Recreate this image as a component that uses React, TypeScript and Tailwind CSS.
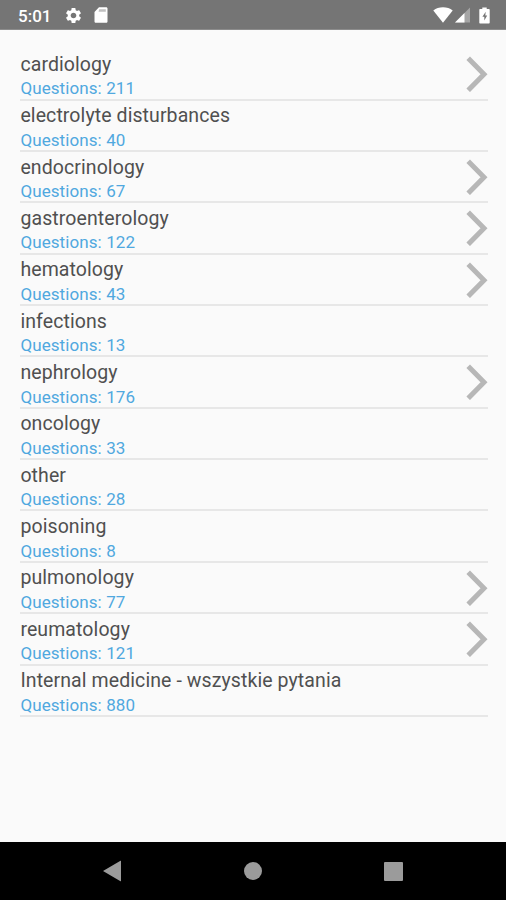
import { MdSettings } from 'react-icons/md'

interface Category {
  name: string
  questions: number
  nested?: boolean
}

const categories: Category[] = [
  { name: 'cardiology', questions: 211, nested: true },
  { name: 'electrolyte disturbances', questions: 40 },
  { name: 'endocrinology', questions: 67, nested: true },
  { name: 'gastroenterology', questions: 122, nested: true },
  { name: 'hematology', questions: 43, nested: true },
  { name: 'infections', questions: 13 },
  { name: 'nephrology', questions: 176, nested: true },
  { name: 'oncology', questions: 33 },
  { name: 'other', questions: 28 },
  { name: 'poisoning', questions: 8 },
  { name: 'pulmonology', questions: 77, nested: true },
  { name: 'reumatology', questions: 121, nested: true },
  { name: 'Internal medicine - wszystkie pytania', questions: 880 },
]

function StatusBar() {
  return (
    <header className="flex h-[30px] shrink-0 items-center border-b border-[#8c8c8c] bg-[#757575] pr-4 pl-[18px] text-white">
      <span className="w-[46px] pt-0.5 text-[17px] leading-5 font-medium">5:01</span>
      <MdSettings className="mt-px size-[19px]" />
      <svg className="mt-px ml-[11px] h-4 w-[14px]" viewBox="0 0 14 16" fill="currentColor">
        <path d="M5 .2h7.2c.7 0 1.3.6 1.3 1.3v13c0 .7-.6 1.3-1.3 1.3H1.8c-.7 0-1.3-.6-1.3-1.3V5z" />
        <path d="M5.2 2.2h6.6v2.6H4.6z" fill="#757575" opacity=".45" />
      </svg>
      <div className="mt-px ml-auto flex items-center">
        <svg className="h-4 w-5" viewBox="0 0 20 16" fill="currentColor">
          <path d="M10 15.8 0.3 3.6C3 1.4 6.3.3 10 .3s7 1.1 9.7 3.3z" />
        </svg>
        <svg className="ml-0.5 h-4 w-[15px]" viewBox="0 0 15 16" fill="currentColor">
          <path d="M0 15.5 15 .5v15z" opacity=".35" />
          <path d="M0 15.5 9.5 6v9.5z" />
        </svg>
        <svg className="ml-[9px] h-[17px] w-[11px]" viewBox="0 0 11 17" fill="currentColor">
          <path
            fillRule="evenodd"
            d="M3.3.4h4.4v1.7h2c.6 0 1 .4 1 1v12.5c0 .6-.4 1-1 1H1.3c-.6 0-1-.4-1-1V3.1c0-.6.4-1 1-1h2zM6.7 4.8 3.4 9.7h1.9v3.8l2.9-5.1H6.3z"
          />
        </svg>
      </div>
    </header>
  )
}

function CategoryRow({ name, questions, nested }: Category) {
  return (
    <li className="flex h-[51.37px] items-start justify-between border-b-2 border-[#e7e7e7]">
      <div className="whitespace-nowrap">
        <p className="pt-[2.6px] pl-[0.4px] text-[19.5px] leading-[25px] tracking-[0.09px] text-[#505050]">{name}</p>
        <p className="-mt-[0.4px] pl-[0.4px] text-[17px] leading-[24px] tracking-[0.09px] text-[#50a8df]">
          Questions: {questions}
        </p>
      </div>
      {nested && (
        <svg
          className="mt-[7px] h-9 w-[22px]"
          viewBox="0 0 22 36"
          fill="none"
          stroke="#b7b7b7"
          strokeWidth="5"
          strokeLinejoin="miter"
        >
          <path d="M2.2 2.3 18 18.3 2.2 34.3" />
        </svg>
      )}
    </li>
  )
}

function NavigationBar() {
  return (
    <nav className="flex h-[58px] shrink-0 items-center justify-between bg-black pr-[103px] pl-[102px] text-[#9b9b9b]">
      <svg className="h-[22px] w-5" viewBox="0 0 20 22" fill="currentColor">
        <path d="M1 11 18.5.8c.3-.2.5 0 .5.3v19.8c0 .3-.2.5-.5.3z" />
      </svg>
      <span className="size-[18px] rounded-full bg-[#9b9b9b]" />
      <span className="size-[19px] rounded-[1px] bg-[#9b9b9b]" />
    </nav>
  )
}

export default function App() {
  return (
    <div className="flex h-[900px] w-[506px] flex-col overflow-hidden bg-[#fafafa] font-[Roboto,sans-serif]">
      <StatusBar />
      <main className="flex-1 pt-[19.2px] pr-[18px] pl-5">
        <ul>
          {categories.map((category) => (
            <CategoryRow key={category.name} {...category} />
          ))}
        </ul>
      </main>
      <NavigationBar />
    </div>
  )
}
